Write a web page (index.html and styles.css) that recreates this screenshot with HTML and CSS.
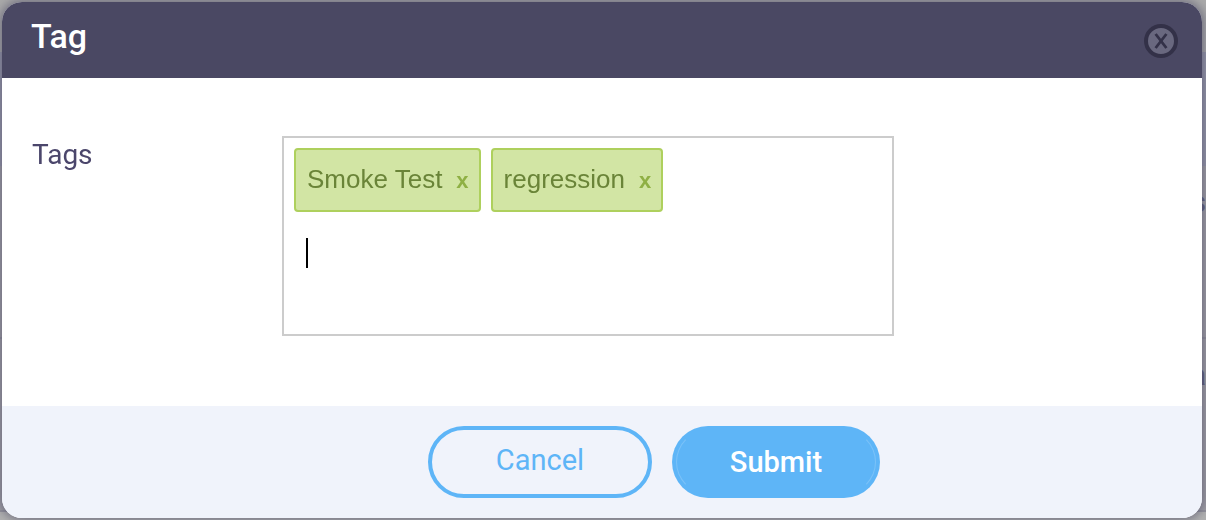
FILE: index.html
```
<!DOCTYPE html>
<html lang="en">
<head>
<meta charset="utf-8">
<meta name="viewport" content="width=device-width, initial-scale=1">
<title>Tag</title>
<link rel="stylesheet" href="styles.css">
</head>
<body>
<div class="backdrop" aria-hidden="true">
  <div class="band band-top"></div>
  <div class="band band-blue"></div>
  <div class="band band-row"><span class="peek">s</span></div>
  <div class="band band-row"><span class="peek">a</span></div>
  <div class="band band-end"></div>
</div>
<form class="modal" role="dialog" aria-labelledby="modal-title">
  <header class="modal-header">
    <h1 class="modal-title" id="modal-title">Tag</h1>
    <button class="close" type="button" aria-label="Close">
      <svg class="close-icon" viewBox="0 0 34 34" aria-hidden="true">
        <circle cx="17" cy="17" r="15" fill="#69687f" stroke="#333148" stroke-width="4"/>
        <path d="M11.6 10 22.4 24M22.4 10 11.6 24" fill="none" stroke="#333148" stroke-width="2.8"/>
      </svg>
    </button>
  </header>
  <div class="modal-body">
    <label class="field-label" for="tag-input">Tags</label>
    <div class="tag-box">
      <span class="tag">Smoke Test <button class="tag-remove" type="button" aria-label="Remove Smoke Test">x</button></span>
      <span class="tag">regression <button class="tag-remove" type="button" aria-label="Remove regression">x</button></span>
      <div class="tag-entry"><input class="tag-input" id="tag-input" type="text"></div>
    </div>
  </div>
  <footer class="modal-footer">
    <button class="btn btn-cancel" type="button">Cancel</button>
    <button class="btn btn-submit" type="submit"><span class="btn-face">Submit</span></button>
  </footer>
</form>
</body>
</html>
```
FILE: styles.css
```
* { box-sizing: border-box; }

body {
  margin: 0;
  min-height: 100vh;
  display: flex;
  padding: 2px 4px 2px 2px;
  overflow: hidden;
  font-family: Roboto, "Liberation Sans", sans-serif;
}

button, input { font: inherit; margin: 0; }

.backdrop {
  position: fixed;
  inset: 0;
  display: flex;
  flex-direction: column;
  background: #a09fa5;
}
.band { flex: none; display: flex; justify-content: flex-end; }
.band-top { height: 52px; background: #aaaaaa; }
.band-blue { height: 114px; background: #9697a9; }
.band-row { height: 173px; border-bottom: 2px solid #92919b; }
.band-end { flex: 1; background: #b0b0b0; }
.peek {
  padding-top: 20px;
  font-size: 30px;
  font-weight: 500;
  line-height: 32px;
  color: #5d5b78;
}

.modal {
  position: relative;
  flex: 1;
  min-width: 0;
  display: flex;
  flex-direction: column;
  border-radius: 20px;
  overflow: hidden;
  background: #ffffff;
  box-shadow: 0 0 10px 2px rgba(74, 72, 98, 0.6);
}

.modal-header {
  display: flex;
  justify-content: space-between;
  align-items: flex-start;
  padding: 14px 24px 20px 29px;
  background: #4a4863;
}
.modal-title {
  margin: 0;
  font-size: 34px;
  font-weight: 500;
  line-height: 40px;
  color: #ffffff;
}
.close {
  margin-top: 8px;
  padding: 0;
  border: 0;
  background: none;
}
.close-icon { display: block; width: 34px; height: 34px; }

.modal-body {
  flex: 1;
  display: grid;
  grid-template-columns: 250px minmax(0, 612px);
  align-items: start;
  padding: 58px 30px;
}
.field-label {
  padding-top: 2px;
  font-size: 28px;
  line-height: 34px;
  color: #4b466b;
}
.tag-box {
  display: flex;
  flex-wrap: wrap;
  align-content: flex-start;
  gap: 10px;
  min-height: 200px;
  padding: 10px;
  border: 2px solid #cccccc;
  font-family: "Liberation Sans", Arial, sans-serif;
}
.tag {
  display: flex;
  align-items: baseline;
  gap: 14px;
  height: 64px;
  padding: 13px 10px 13px 11px;
  border: 2px solid #aed05d;
  border-radius: 4px;
  background: #d2e5a4;
  font-size: 26px;
  line-height: 32px;
  color: #6a8438;
}
.tag-remove {
  padding: 0;
  border: 0;
  background: none;
  font-size: 22px;
  font-weight: 700;
  line-height: 26px;
  color: #8fb044;
}
.tag-entry {
  flex: 1 0 100%;
  padding: 16px 12px;
}
.tag-input {
  display: block;
  width: 100%;
  height: 30px;
  padding: 0;
  border: 0;
  border-left: 2px solid #000000;
  outline: 0;
  background: none;
  font-size: 26px;
}

.modal-footer {
  display: flex;
  justify-content: center;
  gap: 20px;
  padding: 20px 96px 20px 200px;
  background: #f0f3fb;
}
.btn {
  height: 72px;
  border-radius: 36px;
  font-size: 29px;
  line-height: 34px;
}
.btn-cancel {
  width: 224px;
  padding: 0 0 4px;
  border: 4px solid #5eb5f7;
  background: transparent;
  color: #5eb5f7;
}
.btn-submit {
  width: 208px;
  padding: 4px;
  border: 0;
  background: #5eb5f7;
  color: #ffffff;
  font-weight: 500;
}
.btn-face {
  display: flex;
  align-items: center;
  justify-content: center;
  height: 64px;
  border: 1px solid transparent;
  border-right-color: #7bc2f8;
  border-left-color: #7bc2f8;
  border-radius: 32px;
}
```
